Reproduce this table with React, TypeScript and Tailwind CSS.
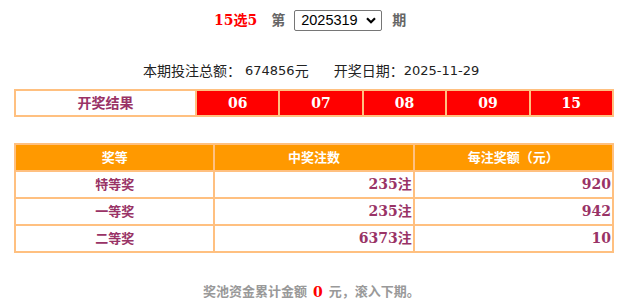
import React from "react";

const purple = "text-[#993366]";

export default function App() {
  const balls = ["06", "07", "08", "09", "15"];
  const rows = [
    ["特等奖", "235注", "920"],
    ["一等奖", "235注", "942"],
    ["二等奖", "6373注", "10"],
  ];
  return (
    <div className="w-[625px] h-[304px] bg-white text-[13px] [font-family:'DejaVu_Sans','Noto_Sans_CJK_SC',sans-serif]">
      {/* top selector */}
      <div className="flex items-center pt-[10px] pl-[214px] h-[31px]">
        <span className="font-bold text-[#ff0000] text-[14px] [font-family:'DejaVu_Serif','Noto_Sans_CJK_SC',serif]">15选5</span>
        <span className="ml-[14px] font-bold text-[#666666] text-[14px]">第</span>
        <div className="relative ml-[9px]">
          <select
            defaultValue="2025319"
            className="appearance-none w-[88px] h-[21px] border border-[#767676] rounded-[2px] bg-white pl-[6px] text-[14.5px] text-black [font-family:'Liberation_Sans',sans-serif] leading-[19px]"
          >
            <option value="2025319">2025319</option>
          </select>
          <svg className="absolute right-[6px] top-[7px] pointer-events-none" width="10" height="7" viewBox="0 0 10 7">
            <path d="M1 1.2 L5 5.2 L9 1.2" fill="none" stroke="#000" strokeWidth="2.2" />
          </svg>
        </div>
        <span className="ml-[10px] font-bold text-[#666666] text-[14px]">期</span>
      </div>

      {/* info line */}
      <div className="flex items-center pl-[143px] mt-[31px] h-[18px] text-[#222]">
        <span className="text-[14px]">本期投注总额：</span>
        <span className="ml-[4px]">674856</span>
        <span className="text-[14px]">元</span>
        <span className="ml-[25px] text-[14px]">开奖日期：</span>
        <span>2025-11-29</span>
      </div>

      {/* results */}
      <div className="ml-[14px] mt-[9px] w-[600px] h-[28px] bg-[#ffc080] p-[2px] flex gap-[2px]">
        <div className={`w-[179px] bg-white flex items-center justify-center font-bold text-[14px] ${purple}`}>
          开奖结果
        </div>
        {balls.map((b) => (
          <div
            key={b}
            className="flex-1 bg-[#ff0000] flex items-center justify-center font-bold text-white text-[14px] [font-family:'DejaVu_Serif',serif]"
          >
            {b}
          </div>
        ))}
      </div>

      {/* prize table */}
      <div className="ml-[14px] mt-[26px] w-[600px] bg-[#ffc080] p-[2px] grid grid-cols-3 gap-[2px]">
        {["奖等", "中奖注数", "每注奖额（元）"].map((h) => (
          <div key={h} className="h-[25px] bg-[#ff9900] flex items-center justify-center font-bold text-white text-[13px]">
            {h}
          </div>
        ))}
        {rows.map((r) => (
          <React.Fragment key={r[0]}>
            <div className={`h-[25px] bg-white flex items-center justify-center font-bold text-[13px] ${purple}`}>{r[0]}</div>
            <div className={`h-[25px] bg-white flex items-center justify-end pr-[1px] font-bold text-[14px] ${purple} [font-family:'DejaVu_Serif','Noto_Sans_CJK_SC',serif]`}>{r[1]}</div>
            <div className={`h-[25px] bg-white flex items-center justify-end pr-[1px] font-bold text-[14px] ${purple} [font-family:'DejaVu_Serif',serif]`}>{r[2]}</div>
          </React.Fragment>
        ))}
      </div>

      {/* footer */}
      <div className="flex items-center pl-[203px] mt-[30px] h-[18px] font-bold text-[#999999] text-[13px]">
        <span>奖池资金累计金额</span>
        <span className="mx-[6px] text-[#ff0000] text-[14px] [font-family:'DejaVu_Serif',serif]">0</span>
        <span>元，滚入下期。</span>
      </div>
    </div>
  );
}
